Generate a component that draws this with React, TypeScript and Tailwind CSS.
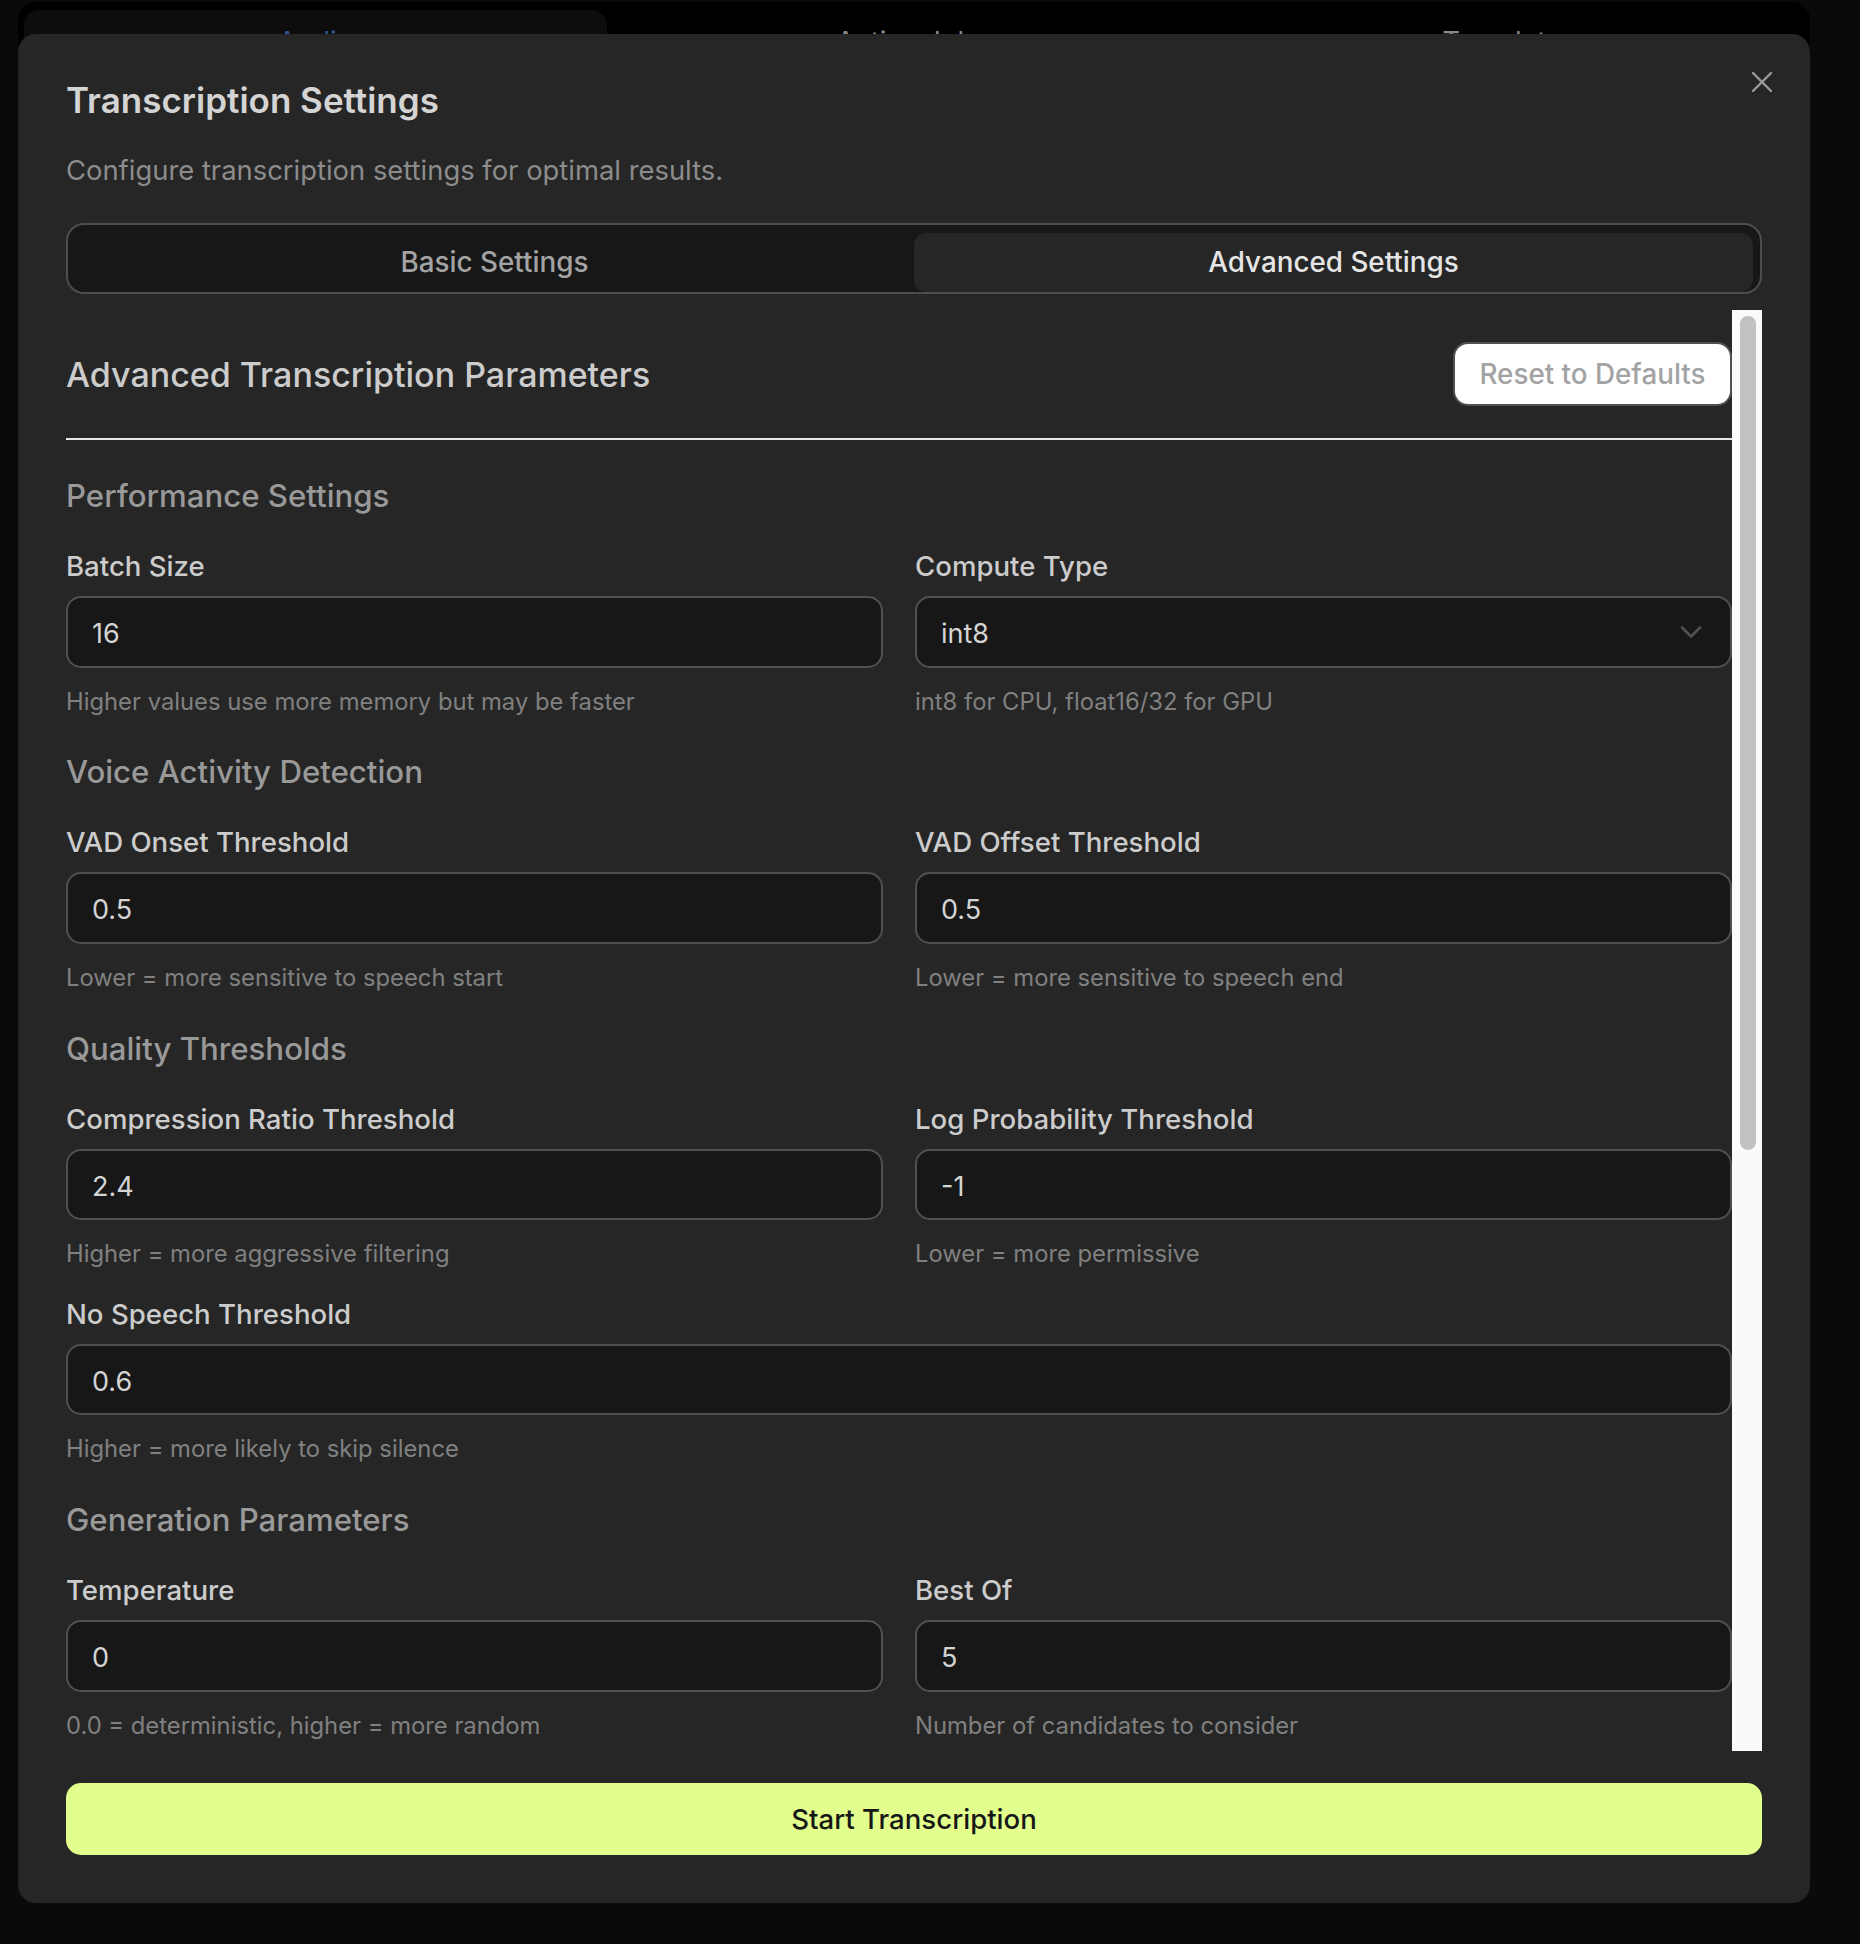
import { X, ChevronDown } from 'lucide-react';

const font = "font-['Inter',sans-serif]";

function Field({ label, value, hint, select }: { label: string; value: string; hint: string; select?: boolean }) {
  return (
    <div className="min-w-0">
      <div className="pt-[1px] text-[27.6px] leading-[26px] font-medium text-[#cccccc]">{label}</div>
      <div className="mt-[17px] flex h-[71.5px] items-center justify-between rounded-[15px] border-2 border-[#505050] bg-[#171717] pl-[24px] pr-[21px]">
        <span className="pt-[5px] text-[27px] text-[#d4d4d4]">{value}</span>
        {select && <ChevronDown className="h-[36px] w-[36px] text-[#4f4f4f]" strokeWidth={1.8} />}
      </div>
      <div className="mt-[22px] text-[23.8px] leading-[24px] text-[#808080]">{hint}</div>
    </div>
  );
}

function Section({ title, children }: { title: string; children: React.ReactNode }) {
  return (
    <section className="mt-[43.9px] first:mt-[41px]">
      <h3 className="text-[31.2px] leading-[30px] font-medium text-[#999999]">{title}</h3>
      <div className="mt-[41px] grid grid-cols-2 gap-x-[32px] gap-y-[33.5px]">{children}</div>
    </section>
  );
}

export default function App() {
  return (
    <div className={`relative h-[1944px] w-full overflow-hidden bg-[#0a0a0a] ${font}`}>
      {/* page behind the dialog, only its top edge shows */}
      <div className="ml-[18px] mr-[50px] mt-[2px] h-[200px] rounded-t-[18px] bg-black pl-[6px] pt-[8px]">
        <div className="grid grid-cols-[583px_583px_583px] gap-[14px] text-center text-[27.6px] leading-[30px]">
          <div className="h-[100px] rounded-[15px] bg-[#0d0d0d] pt-[16px] text-[#2f5596]">Audio</div>
          <div className="pt-[16px] text-[#8a8a8a]">Active Jobs</div>
          <div className="pt-[16px] text-[#8a8a8a]">Templates</div>
        </div>
      </div>

      <div className="absolute left-[18px] top-[34px] flex h-[1869px] w-[1792px] flex-col rounded-[18px] bg-[#262626] px-[48px] pt-[48px]">
        <button className="absolute right-[30px] top-[30px] text-[#9a9a9a]">
          <X className="h-[36px] w-[36px]" strokeWidth={1.6} />
        </button>

        <h2 className="text-[35px] leading-[36px] font-semibold text-[#d4d4d4]">Transcription Settings</h2>
        <p className="mt-[38px] text-[27.4px] leading-[28px] text-[#8c8c8c]">Configure transcription settings for optimal results.</p>

        <div className="mt-[39px] grid h-[71px] grid-cols-2 rounded-[18px] border-2 border-[#4d4d4d] bg-[#171717] px-[7px] pt-[8px]">
          <div className="flex h-[59px] items-center justify-center text-[27.8px] font-medium text-[#a3a3a3]">Basic Settings</div>
          <div className="flex h-[59px] items-center justify-center rounded-[12px] bg-[#262626] text-[27.8px] font-medium text-[#e5e5e5]">Advanced Settings</div>
        </div>

        <div className="mt-[16px] flex h-[1441px] overflow-hidden">
          <div className="min-w-0 flex-1">
            <div className="flex items-center justify-between border-b-2 border-[#e5e5e5] pb-[32px] pt-[32px]">
              <h3 className="text-[34px] font-medium text-[#cccccc]">Advanced Transcription Parameters</h3>
              <button className="flex h-[64px] w-[279px] items-center justify-center rounded-[15px] border-2 border-[#505050] bg-white pt-[2px] text-[27.8px] font-medium text-[#a3a3a3]">Reset to Defaults</button>
            </div>

            <div>
              <Section title="Performance Settings">
                <Field label="Batch Size" value="16" hint="Higher values use more memory but may be faster" />
                <Field label="Compute Type" value="int8" hint="int8 for CPU, float16/32 for GPU" select />
              </Section>
              <Section title="Voice Activity Detection">
                <Field label="VAD Onset Threshold" value="0.5" hint="Lower = more sensitive to speech start" />
                <Field label="VAD Offset Threshold" value="0.5" hint="Lower = more sensitive to speech end" />
              </Section>
              <Section title="Quality Thresholds">
                <Field label="Compression Ratio Threshold" value="2.4" hint="Higher = more aggressive filtering" />
                <Field label="Log Probability Threshold" value="-1" hint="Lower = more permissive" />
                <div className="col-span-2">
                  <Field label="No Speech Threshold" value="0.6" hint="Higher = more likely to skip silence" />
                </div>
              </Section>
              <Section title="Generation Parameters">
                <Field label="Temperature" value="0" hint="0.0 = deterministic, higher = more random" />
                <Field label="Best Of" value="5" hint="Number of candidates to consider" />
              </Section>
            </div>
          </div>

          {/* scrollbar */}
          <div className="w-[30px] shrink-0 bg-[#fafafa] pl-[8px] pr-[6px] pt-[6px]">
            <div className="h-[834px] rounded-full bg-[#c1c1c1]" />
          </div>
        </div>

        <button className="mt-[32px] h-[72px] rounded-[15px] bg-[#e2ff8d] pt-[2px] text-[27.6px] font-medium text-[#171717]">Start Transcription</button>
      </div>
    </div>
  );
}
